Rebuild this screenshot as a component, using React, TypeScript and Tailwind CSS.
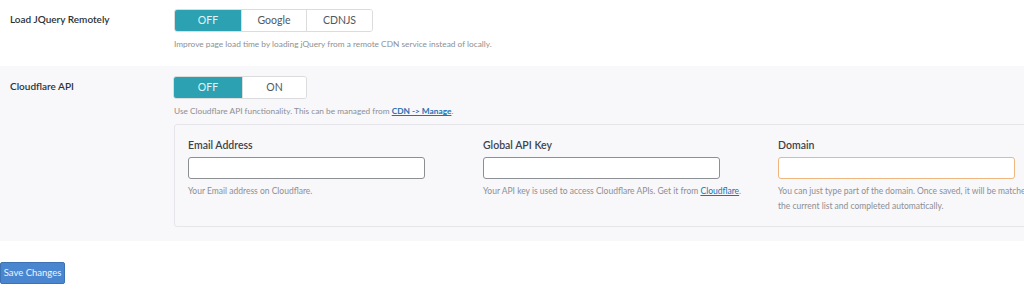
import React from 'react';

const font = { fontFamily: 'Lato, "Open Sans", "Liberation Sans", sans-serif' };

const Segmented: React.FC<{ options: string[]; widths: string[] }> = ({ options, widths }) => (
  <div className="flex w-fit self-start h-[23px] rounded-[3px] border border-[#dcdcde] overflow-hidden">
    {options.map((opt, i) => (
      <div
        key={opt}
        className={`${widths[i]} flex items-center justify-center text-[10.5px] ${
          i === 0 ? 'bg-[#2ca1b1] text-[#e3f3f5]' : 'bg-white text-[#50575e] border-l border-[#dcdcde]'
        }`}
      >
        {opt}
      </div>
    ))}
  </div>
);

const Field: React.FC<{ label: string; help: React.ReactNode; orange?: boolean }> = ({ label, help, orange }) => (
  <div className="w-[295px] shrink-0">
    <div className="text-[10.5px] font-semibold text-[#3c434a] h-[14px] leading-[14px]">{label}</div>
    <div
      className={`mt-[5px] w-[237px] h-[22px] rounded-[3px] bg-white border ${
        orange ? 'border-[#f0b67f]' : 'border-[#8c8f94]'
      }`}
    />
    <div className="mt-[5px] w-[272px] text-[8.5px] leading-[15px] text-[#8c8f94]">{help}</div>
  </div>
);

export default function App() {
  return (
    <div className="w-[1024px] h-[308px] overflow-hidden bg-white" style={font}>
      {/* JQuery row */}
      <div className="flex h-[66px] pt-[9px]">
        <div className="w-[174px] shrink-0 pl-[10px] pt-[3px] text-[10px] font-semibold text-[#2c3338]">Load JQuery Remotely</div>
        <div className="flex flex-col">
          <Segmented options={['OFF', 'Google', 'CDNJS']} widths={['w-[66px]', 'w-[65px]', 'w-[66px]']} />
          <div className="mt-[6px] text-[8.3px] text-[#8c8f94]">
            Improve page load time by loading jQuery from a remote CDN service instead of locally.
          </div>
        </div>
      </div>

      {/* Cloudflare row */}
      <div className="flex bg-[#f8f7fa] h-[175px] pt-[10px]">
        <div className="w-[173px] pl-[10px] pt-[3px] text-[10px] font-semibold text-[#2c3338] shrink-0">Cloudflare API</div>
        <div className="flex flex-col">
          <Segmented options={['OFF', 'ON']} widths={['w-[68px]', 'w-[64px]']} />
          <div className="mt-[6px] pl-[1px] text-[8.3px] text-[#8c8f94]">
            Use Cloudflare API functionality. This can be managed from{' '}
            <span className="text-[#2271b1] underline font-bold">CDN -&gt; Manage</span>.
          </div>
          <div className="mt-[7px] ml-[1px] w-[900px] h-[103px] border border-[#e6e5ea] rounded-[3px] flex pl-[13px] pt-[13px]">
            <Field label="Email Address" help="Your Email address on Cloudflare." />
            <Field
              label="Global API Key"
              help={
                <>
                  Your API key is used to access Cloudflare APIs. Get it from{' '}
                  <span className="text-[#2271b1] underline">Cloudflare</span>.
                </>
              }
            />
            <Field
              label="Domain"
              orange
              help="You can just type part of the domain. Once saved, it will be matched with the current list and completed automatically."
            />
          </div>
        </div>
      </div>

      {/* Save */}
      <div className="flex pt-[21px]">
        <button className="h-[22px] w-[65px] flex items-center justify-center bg-[#4a86cf] text-[#eef4fb] text-[9.5px] rounded-[2px] border border-[#3d73b3]">
          Save Changes
        </button>
      </div>
    </div>
  );
}
